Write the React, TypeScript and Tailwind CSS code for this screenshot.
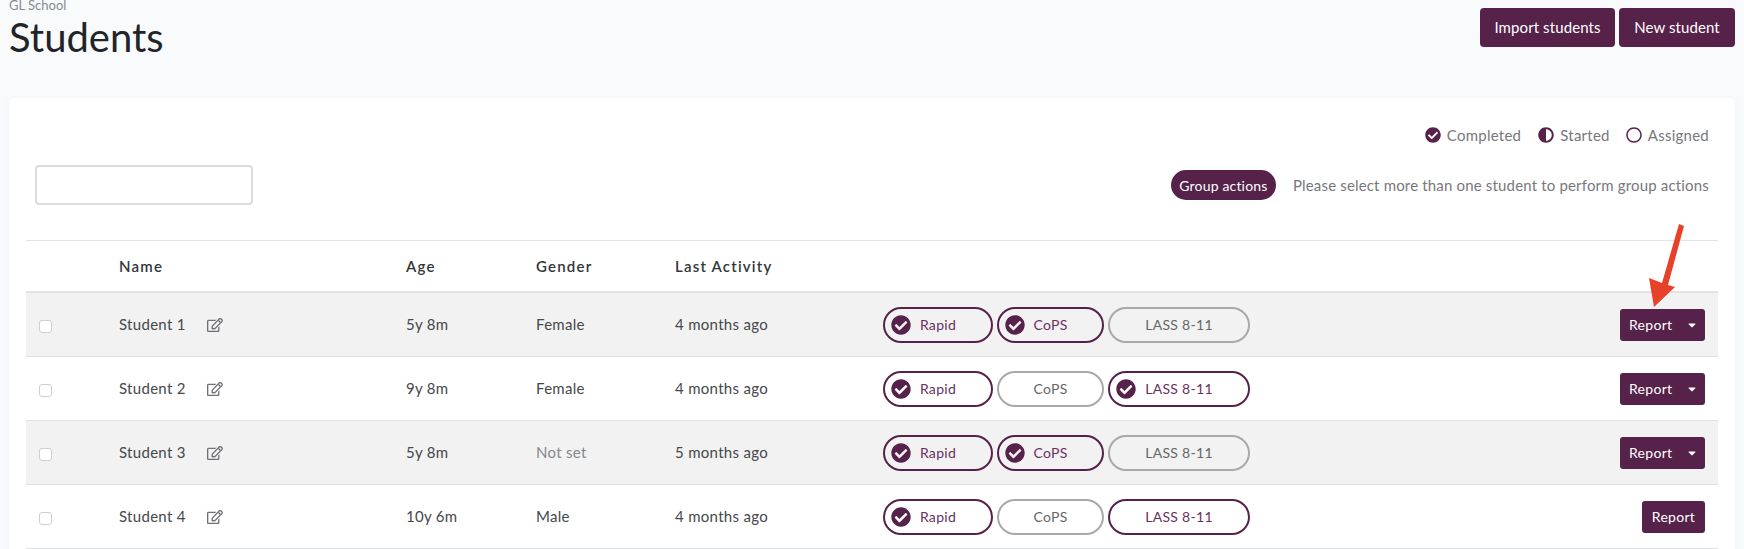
import React from 'react'
import { FaAdjust, FaCaretDown, FaCheckCircle, FaRegCircle, FaRegEdit } from 'react-icons/fa'

const students = [
    { name: 'Student 1', age: '5y 8m', gender: 'Female', activity: '4 months ago', tests: ['done', 'done', 'none'], menu: true },
    { name: 'Student 2', age: '9y 8m', gender: 'Female', activity: '4 months ago', tests: ['done', 'none', 'done'], menu: true },
    { name: 'Student 3', age: '5y 8m', gender: 'Not set', activity: '5 months ago', tests: ['done', 'done', 'none'], menu: true },
    { name: 'Student 4', age: '10y 6m', gender: 'Male', activity: '4 months ago', tests: ['done', 'none', 'assigned'], menu: false },
]

const Pill = ({ label, status, width }: { label: string, status: string, width: string }) => {
    const active = status !== 'none'
    return (
        <div className={`relative flex h-[36px] items-center justify-center rounded-full border-2 text-[14px] tracking-[0.3px] ${width} ${active ? 'border-[#56224a] text-[#6b2f5e]' : 'border-[#a9a9a9] text-[#666666]'}`}>
            {status === 'done' && <FaCheckCircle className='absolute left-[6px] top-[6px] text-[20px] text-[#56224a]' />}
            <span>{label}</span>
        </div>
    )
}

const App = () => {
    return (
        <div className='relative h-[549px] overflow-hidden bg-[#f9fafc] font-["Lato",sans-serif] text-[#212529]'>
            <div className='flex items-start justify-between pl-[9px] pr-[9px]'>
                <div>
                    <div className='mt-[-3px] text-[13px] leading-[16px] text-[#858a8f]'>GL School</div>
                    <h1 className='mt-[1px] text-[40px] leading-[47px] font-normal'>Students</h1>
                </div>
                <div className='mt-[8px] flex gap-[4px]'>
                    <button className='h-[39px] w-[135px] rounded-[4px] bg-[#56224a] text-[15px] tracking-[0.1px] text-white'>Import students</button>
                    <button className='h-[39px] w-[116px] rounded-[4px] bg-[#56224a] text-[15px] tracking-[0.1px] text-white'>New student</button>
                </div>
            </div>

            <div className='mx-[9px] mt-[37px] h-[460px] rounded-[4px] bg-white px-[17px] shadow-[0_0_4px_rgba(0,0,0,0.04)]'>
                <div className='flex h-[143px] justify-between border-b border-[#e2e3e5] pl-[9px] pr-[9px]'>
                    <input className='mt-[67px] h-[40px] w-[218px] rounded-[4px] border-2 border-[#dcdcdc] bg-white' />
                    <div className='flex flex-col items-end'>
                        <div className='mt-[26px] flex h-[22px] items-center text-[15px] tracking-[0.25px] text-[#77777c]'>
                            <FaCheckCircle className='mr-[6px] text-[16px] text-[#56224a]' />
                            <span>Completed</span>
                            <FaAdjust className='ml-[17px] mr-[6px] text-[16px] text-[#56224a]' />
                            <span>Started</span>
                            <FaRegCircle className='ml-[16px] mr-[6px] text-[16px] text-[#56224a]' />
                            <span>Assigned</span>
                        </div>
                        <div className='mt-[24px] flex items-center text-[15px] tracking-[0.17px] text-[#77777c]'>
                            <button className='mr-[17px] h-[30px] w-[105px] rounded-full bg-[#56224a] text-[14px] text-white'>Group actions</button>
                            <span>Please select more than one student to perform group actions</span>
                        </div>
                    </div>
                </div>

                <div className='flex h-[52px] items-center border-b-2 border-[#e2e3e5] text-[15px] font-semibold tracking-[1.2px] text-[#33363a]'>
                    <div className='w-[93px]' />
                    <div className='w-[287px]'>Name</div>
                    <div className='w-[130px]'>Age</div>
                    <div className='w-[139px]'>Gender</div>
                    <div>Last Activity</div>
                </div>

                {students.map((s, i) => (
                    <div key={s.name} className={`flex h-[64px] items-center border-b border-[#e2e3e5] text-[15px] tracking-[0.3px] text-[#45484c] ${i % 2 === 0 ? 'bg-[#f2f2f2]' : 'bg-white'}`}>
                        <div className='w-[93px] pl-[13px]'>
                            <input type='checkbox' className='mt-[4px] block h-[13px] w-[13px] appearance-none rounded-[3px] border border-[#cfcfcf] bg-white' />
                        </div>
                        <div className='flex w-[287px] items-center'>
                            <span className='w-[88px]'>{s.name}</span>
                            <FaRegEdit className='text-[16px] text-[#6f7175]' />
                        </div>
                        <div className='w-[130px]'>{s.age}</div>
                        <div className={`w-[139px] ${s.gender === 'Not set' ? 'text-[#85888c]' : ''}`}>{s.gender}</div>
                        <div className='w-[208px]'>{s.activity}</div>
                        <div className='flex gap-[4px]'>
                            <Pill label='Rapid' status={s.tests[0]} width='w-[110px]' />
                            <Pill label='CoPS' status={s.tests[1]} width='w-[107px]' />
                            <Pill label='LASS 8-11' status={s.tests[2]} width='w-[142px]' />
                        </div>
                        <div className='ml-auto pr-[13px]'>
                            {s.menu ? (
                                <button className='flex h-[32px] w-[85px] items-center rounded-[3px] bg-[#56224a] pl-[9px] text-[14px] tracking-[0.3px] text-white'>
                                    Report
                                    <FaCaretDown className='ml-[14px] text-[12px]' />
                                </button>
                            ) : (
                                <button className='h-[32px] w-[63px] rounded-[3px] bg-[#56224a] text-[14px] tracking-[0.3px] text-white'>Report</button>
                            )}
                        </div>
                    </div>
                ))}
            </div>

            <svg className='absolute left-[1640px] top-[220px]' width='50' height='90' viewBox='0 0 50 90'>
                <path d='M39 4 L44 6 L28 65 L35 67 L14 87 L9 58 L22 63 Z' fill='#e8412a' />
            </svg>
        </div>
    )
}

export default App
